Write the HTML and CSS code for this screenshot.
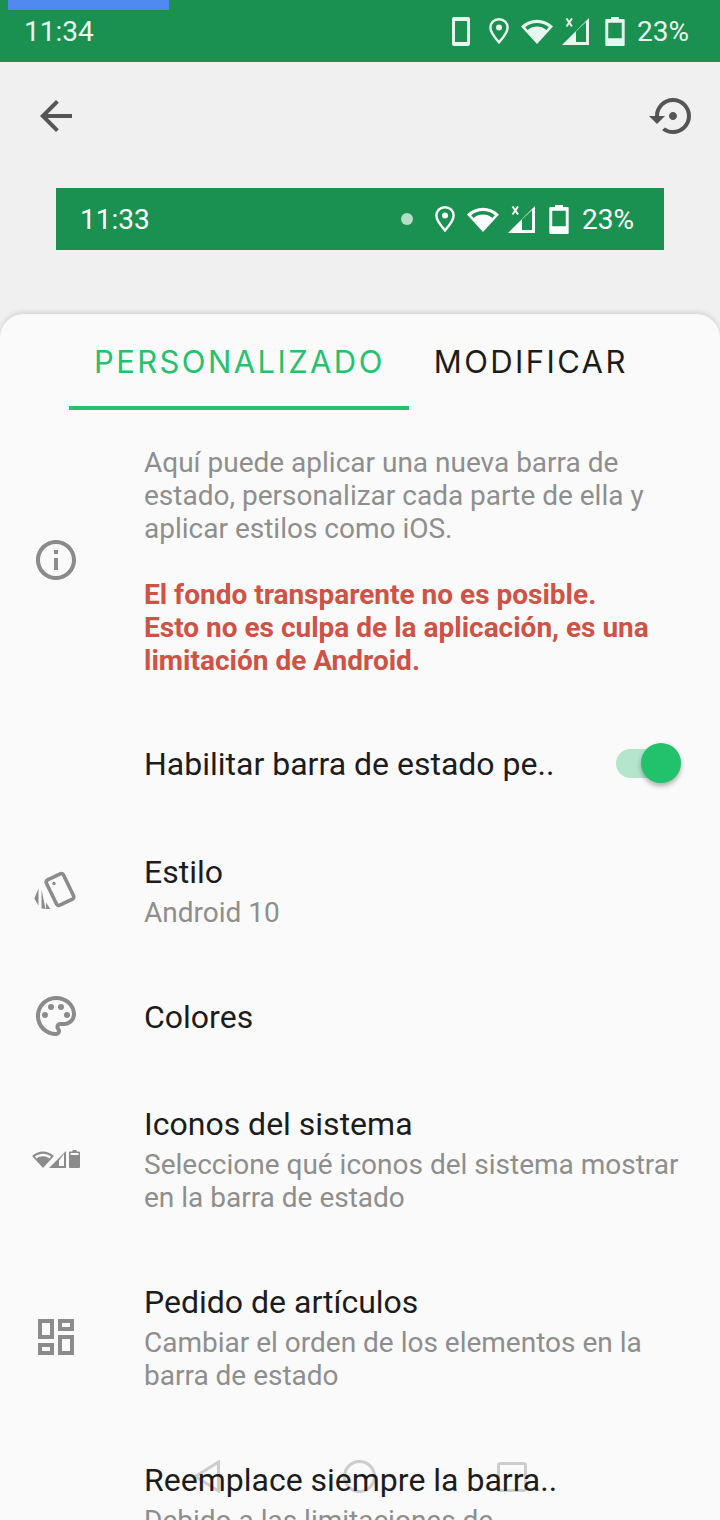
FILE: index.html
```html
<!DOCTYPE html>
<html lang="es">
<head>
<meta charset="utf-8">
<title>Barra de estado</title>
<link rel="stylesheet" href="styles.css">
</head>
<body>
<svg class="defs" width="0" height="0" aria-hidden="true">
  <symbol id="i-phone" viewBox="0 0 18 29"><path fill-rule="evenodd" d="M2 0h14a2 2 0 0 1 2 2v25a2 2 0 0 1-2 2H2a2 2 0 0 1-2-2V2a2 2 0 0 1 2-2zM3 4v21h12V4z"/></symbol>
  <symbol id="i-pin" viewBox="0 0 20 26"><path fill="none" stroke="currentColor" stroke-width="2.4" d="M10 1.2C5 1.2 1.4 5 1.4 9.6 1.4 15 10 24.4 10 24.4S18.6 15 18.6 9.6C18.6 5 15 1.2 10 1.2z"/><circle cx="10" cy="9.5" r="3"/></symbol>
  <symbol id="i-wifi" viewBox="0 0 32 25"><path fill-rule="evenodd" d="M0 7.5C9-1.5 23-1.5 32 7.5L16 25zM4.2 8.2 6.6 11C12 6.4 20 6.4 25.4 11l2.4-2.8C21 2.6 11 2.6 4.2 8.2z"/></symbol>
  <symbol id="i-signal" viewBox="0 0 27 27"><path fill-rule="evenodd" d="M27 0v27H0zM14 13.5V24h10V4z"/><path fill="none" stroke="currentColor" stroke-width="2" d="M4.5 0.5 10 8.5M10 0.5 4.5 8.5"/></symbol>
  <symbol id="i-battery" viewBox="0 0 20 30"><path fill-rule="evenodd" d="M6 0h8v2h5a1 1 0 0 1 1 1v26a1 1 0 0 1-1 1H1a1 1 0 0 1-1-1V3a1 1 0 0 1 1-1h5zM3 6v16h14V6z"/></symbol>
  <symbol id="i-battery-full" viewBox="0 0 11 18"><path d="M3.5 0h4v1.5H10a1 1 0 0 1 1 1V17a1 1 0 0 1-1 1H1a1 1 0 0 1-1-1V2.5a1 1 0 0 1 1-1h2.5zM1.5 3v2h8V3z" fill-rule="evenodd"/></symbol>
  <symbol id="i-signal-mini" viewBox="0 0 17 17"><path fill-rule="evenodd" d="M17 0v17H0zM10 9.5V15h5V3z"/></symbol>
</svg>

<div class="screen">
  <div class="progress"></div>
  <div class="statusbar">
    <span class="clock">11:34</span>
    <div class="indicators">
      <svg class="ic-phone gap-19"><use href="#i-phone"/></svg>
      <svg class="ic-pin gap-12"><use href="#i-pin"/></svg>
      <svg class="ic-wifi gap-9"><use href="#i-wifi"/></svg>
      <svg class="ic-signal gap-16"><use href="#i-signal"/></svg>
      <svg class="ic-battery gap-12"><use href="#i-battery"/></svg>
      <span class="pct">23%</span>
    </div>
  </div>

  <div class="toolbar">
    <svg class="icon-48 dark" viewBox="0 0 24 24"><path d="M20 11H7.83l5.59-5.59L12 4l-8 8 8 8 1.41-1.41L7.83 13H20v-2z"/></svg>
    <svg class="icon-48 dark" viewBox="0 0 24 24"><path d="M14 12c0-1.1-.9-2-2-2s-2 .9-2 2 .9 2 2 2 2-.9 2-2zm-2-9c-4.97 0-9 4.03-9 9H0l4 4 4-4H5c0-3.87 3.13-7 7-7s7 3.13 7 7-3.13 7-7 7c-1.51 0-2.91-.49-4.06-1.3l-1.42 1.44C8.04 20.3 9.94 21 12 21c4.97 0 9-4.03 9-9s-4.03-9-9-9z"/></svg>
  </div>

  <div class="preview">
    <span class="clock">11:33</span>
    <div class="indicators">
      <span class="dot"></span>
      <svg class="ic-pin gap-12"><use href="#i-pin"/></svg>
      <svg class="ic-wifi gap-9"><use href="#i-wifi"/></svg>
      <svg class="ic-signal gap-14"><use href="#i-signal"/></svg>
      <svg class="ic-battery gap-13"><use href="#i-battery"/></svg>
      <span class="pct">23%</span>
    </div>
  </div>

  <section class="sheet">
    <div class="navbar">
      <svg class="nav-back" viewBox="0 0 27 33"><path d="M25.5 2v29L2.5 16.5z"/></svg>
      <svg class="nav-home" viewBox="0 0 33 33"><circle cx="16.5" cy="16.5" r="15"/></svg>
      <svg class="nav-recent" viewBox="0 0 30 30"><rect x="1.5" y="1.5" width="27" height="27" rx="2"/></svg>
    </div>

    <div class="tabs">
      <div class="tab active">PERSONALIZADO</div>
      <div class="tab">MODIFICAR</div>
    </div>

    <div class="list">
      <div class="row tight">
        <div class="lead nudge-info">
          <svg class="icon-48 gray" viewBox="0 0 24 24"><path d="M11 7h2v2h-2zm0 4h2v6h-2zm1-9C6.48 2 2 6.48 2 12s4.48 10 10 10 10-4.48 10-10S17.52 2 12 2zm0 18c-4.41 0-8-3.59-8-8s3.59-8 8-8 8 3.59 8 8-3.59 8-8 8z"/></svg>
        </div>
        <div class="body">
          <p class="sub">Aquí puede aplicar una nueva barra de<br>estado, personalizar cada parte de ella y<br>aplicar estilos como iOS.</p>
          <p class="warn">El fondo transparente no es posible.<br>Esto no es culpa de la aplicación, es una<br>limitación de Android.</p>
        </div>
      </div>

      <div class="row">
        <div class="lead"></div>
        <div class="body"><div class="title">Habilitar barra de estado pe..</div></div>
        <div class="switch"><span class="thumb"></span></div>
      </div>

      <div class="row">
        <div class="lead">
          <svg class="icon-48 gray" viewBox="0 0 48 48">
            <rect x="18.5" y="8.5" width="19" height="28" rx="2.5" transform="rotate(-26 28 22.5)" fill="none" stroke="currentColor" stroke-width="3.6"/>
            <circle cx="22" cy="16.5" r="1.7"/>
            <path d="M6.5 21.5 2.3 31.5 6.5 38.5zM9.5 22.5v19l4 .4zM14 35.5l4.3 6.4H14z"/>
          </svg>
        </div>
        <div class="body">
          <div class="title">Estilo</div>
          <div class="sub spaced">Android 10</div>
        </div>
      </div>

      <div class="row tight">
        <div class="lead nudge-palette">
          <svg class="icon-48 gray" viewBox="0 0 24 24"><path d="M12 22C6.49 22 2 17.51 2 12S6.49 2 12 2s10 4.04 10 9c0 3.31-2.69 6-6 6h-1.77c-.28 0-.5.22-.5.5 0 .12.05.23.13.33.41.47.64 1.06.64 1.67 0 1.38-1.12 2.5-2.5 2.5zm0-18c-4.41 0-8 3.59-8 8s3.59 8 8 8c.28 0 .5-.22.5-.5 0-.16-.08-.28-.14-.35-.41-.46-.63-1.05-.63-1.65 0-1.38 1.12-2.5 2.5-2.5H16c2.21 0 4-1.79 4-4 0-3.86-3.59-7-8-7z"/><circle cx="6.5" cy="11.5" r="1.5"/><circle cx="9.5" cy="7.5" r="1.5"/><circle cx="14.5" cy="7.5" r="1.5"/><circle cx="17.5" cy="11.5" r="1.5"/></svg>
        </div>
        <div class="body"><div class="title">Colores</div></div>
      </div>

      <div class="row">
        <div class="lead">
          <div class="sysicons gray">
            <svg class="mini-wifi"><use href="#i-wifi"/></svg>
            <svg class="mini-signal"><use href="#i-signal-mini"/></svg>
            <svg class="mini-battery"><use href="#i-battery-full"/></svg>
          </div>
        </div>
        <div class="body">
          <div class="title">Iconos del sistema</div>
          <div class="sub spaced">Seleccione qué iconos del sistema mostrar<br>en la barra de estado</div>
        </div>
      </div>

      <div class="row">
        <div class="lead">
          <svg class="icon-48 gray" viewBox="0 0 24 24"><path d="M19 5v2h-4V5h4M9 5v6H5V5h4m10 8v6h-4v-6h4M9 17v2H5v-2h4M21 3h-8v6h8V3zM11 3H3v10h8V3zm10 8h-8v10h8V11zm-10 4H3v6h8v-6z"/></svg>
        </div>
        <div class="body">
          <div class="title">Pedido de artículos</div>
          <div class="sub spaced">Cambiar el orden de los elementos en la<br>barra de estado</div>
        </div>
      </div>

      <div class="row">
        <div class="lead"></div>
        <div class="body">
          <div class="title">Reemplace siempre la barra..</div>
          <div class="sub spaced">Debido a las limitaciones de</div>
        </div>
      </div>
    </div>
  </section>
</div>
</body>
</html>
```

FILE: styles.css
```css
* { box-sizing: border-box; }

html, body {
  margin: 0;
  padding: 0;
  height: 1520px;
  overflow: hidden;
}

body {
  font-family: Roboto, "Liberation Sans", sans-serif;
  background: #f0f0f0;
}

.defs { position: absolute; }

.screen {
  position: relative;
  width: 720px;
  height: 1520px;
  overflow: hidden;
  display: flex;
  flex-direction: column;
}

.progress {
  position: absolute;
  top: 0;
  left: 8px;
  width: 161px;
  height: 10px;
  background: #5089ef;
}

.statusbar {
  height: 62px;
  flex: none;
  background: #1a9150;
  color: #e9f6ef;
  display: flex;
  align-items: center;
  justify-content: space-between;
  padding: 0 31px 0 24px;
}

.clock, .pct {
  font-size: 28px;
  font-weight: 400;
  line-height: 34px;
  margin-top: 2px;
}

.indicators {
  display: flex;
  align-items: center;
}

.indicators svg { fill: currentColor; flex: none; }

.gap-9 { margin-right: 9px; }
.gap-12 { margin-right: 12px; }
.gap-13 { margin-right: 13px; }
.gap-14 { margin-right: 14px; }
.gap-16 { margin-right: 16px; }
.gap-19 { margin-right: 19px; }

.ic-phone { width: 18px; height: 29px; }
.ic-pin { width: 20px; height: 26px; }
.ic-wifi { width: 32px; height: 25px; }
.ic-signal { width: 27px; height: 27px; }
.ic-battery { width: 20px; height: 29px; }

.toolbar {
  height: 108px;
  flex: none;
  display: flex;
  align-items: center;
  justify-content: space-between;
  padding: 0 23px 0 32px;
}

.icon-48 { width: 48px; height: 48px; display: block; flex: none; }
.dark { fill: #555; color: #555; }
.gray { fill: #8b8b8b; color: #8b8b8b; }

.preview {
  height: 62px;
  flex: none;
  margin: 18px 56px 0;
  background: #1a9150;
  color: #fff;
  display: flex;
  align-items: center;
  justify-content: space-between;
  padding: 0 30px 0 24px;
}

.dot {
  width: 12px;
  height: 12px;
  border-radius: 50%;
  background: #b5dcc7;
  margin-right: 22px;
}

.sheet {
  position: relative;
  flex: none;
  height: 1206px;
  margin-top: 64px;
  background: #fafafa;
  border-radius: 24px 24px 0 0;
  box-shadow: 0 -2px 5px rgba(0, 0, 0, .12);
}

.navbar {
  position: absolute;
  inset: 0;
  pointer-events: none;
}

.navbar svg {
  position: absolute;
  fill: none;
  stroke: #cdcdcd;
  stroke-width: 3;
}

.nav-back { left: 193px; top: 1146px; width: 27px; height: 33px; }
.nav-home { left: 343px; top: 1146px; width: 33px; height: 33px; }
.nav-recent { left: 497px; top: 1148px; width: 30px; height: 30px; }

.tabs {
  position: relative;
  display: flex;
  padding-left: 69px;
}

.tab {
  font-family: Inter, "Liberation Sans", sans-serif;
  font-size: 31px;
  letter-spacing: 2.4px;
  line-height: 36px;
  padding: 30px 24px 26px 25px;
  color: #1c1c1c;
  border-bottom: 4px solid transparent;
}

.tab.active {
  color: #25c16f;
  border-bottom-color: #25c16f;
}

.list {
  position: relative;
  display: flex;
  flex-direction: column;
  gap: 68px;
  padding-top: 36px;
}

.row {
  display: flex;
  align-items: center;
}

.tight { margin-bottom: -1px; }

.lead {
  width: 144px;
  flex: none;
  padding-left: 32px;
}

.lead .icon-48 { margin: -4px 0; }

.nudge-info { margin-top: -4px; }
.nudge-palette { margin-top: -2px; }

.body {
  flex: 1;
  min-width: 0;
}

.title {
  font-size: 32px;
  line-height: 40px;
  color: #1c1c1c;
}

.sub, .warn {
  margin: 0;
  font-size: 28px;
  line-height: 33px;
  color: #8e8e8e;
}

.spaced { margin-top: 4px; }

.warn {
  margin-top: 33px;
  color: #cf5246;
  font-weight: 700;
}

.switch {
  position: relative;
  flex: none;
  width: 44px;
  height: 29px;
  margin-right: 60px;
  margin-bottom: 2px;
  border-radius: 15px;
  background: #b5e6cd;
}

.thumb {
  position: absolute;
  top: -6px;
  left: 25px;
  width: 40px;
  height: 40px;
  border-radius: 50%;
  background: #22c16b;
  box-shadow: 0 3px 5px rgba(0, 0, 0, .3);
}

.sysicons {
  display: flex;
  align-items: center;
  height: 18px;
  width: 48px;
}

.sysicons svg { display: block; flex: none; }
.mini-wifi { width: 22px; height: 17px; }
.mini-signal { width: 17px; height: 17px; margin-left: -5px; }
.mini-battery { width: 11px; height: 18px; margin-left: 3px; }
```
